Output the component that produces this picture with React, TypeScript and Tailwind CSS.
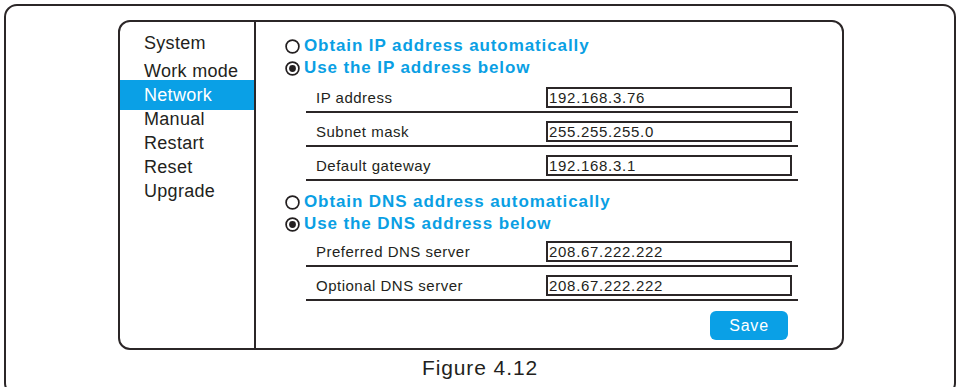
import React from "react";

function Radio({ checked }: { checked: boolean }) {
  return (
    <svg width="15" height="15" viewBox="0 0 15 15" className="shrink-0">
      <circle cx="7.5" cy="7.5" r="6.4" fill="none" stroke="#231f20" strokeWidth="1.7" />
      {checked && <circle cx="7.5" cy="7.5" r="3.4" fill="#231f20" />}
    </svg>
  );
}

function RadioLine({ checked, text }: { checked: boolean; text: string }) {
  return (
    <div className="flex h-[22px] items-center gap-[4px] pl-[29px]">
      <Radio checked={checked} />
      <span className="text-[17px] font-bold leading-[22px] tracking-[0.9px] text-[#0a9fe4]">{text}</span>
    </div>
  );
}

function Row({ label, value, tall }: { label: string; value: string; tall: boolean }) {
  return (
    <div
      className={
        "ml-[50px] mr-[44px] flex items-end justify-between border-b-2 border-[#2b2627] pb-[3px] pl-[10px] pr-[6px] " +
        (tall ? "h-[34px]" : "h-[32px]")
      }
    >
      <span className="text-[15px] leading-[21px] tracking-[0.5px] text-[#231f20]">{label}</span>
      <div className="h-[21px] w-[246px] border-2 border-[#2b2627] pl-[1px] text-[15px] leading-[17px] tracking-[0.7px] text-[#231f20]">
        {value}
      </div>
    </div>
  );
}

export default function App() {
  const menu = "text-[18px] tracking-[0.3px] text-[#231f20] pl-[24px]";
  return (
    <div className="h-[387px] w-[957px] overflow-hidden bg-white font-['Liberation_Sans',Arial,sans-serif]">
      <div className="ml-[4px] mt-[4px] h-[392px] w-[952px] rounded-[13px] border-2 border-[#2b2627]">
        <div className="ml-[112px] mt-[14px] flex h-[330px] w-[726px] rounded-[12px] border-2 border-[#2b2627]">
          {/* Sidebar */}
          <div className="flex w-[136px] flex-col border-r-2 border-[#2b2627]">
            <div className={menu + " mt-[11px] leading-[20px]"}>System</div>
            <div className={menu + " mt-[8px] leading-[20px]"}>Work mode</div>
            <div className={"-mt-[1px] h-[30px] bg-[#0aa0e6] pl-[24px] text-[18px] leading-[30px] tracking-[0.3px] text-white"}>Network</div>
            <div className={menu + " h-[18px] leading-[18px]"}>Manual</div>
            <div className={menu + " mt-[3px] h-[24px] leading-[24px]"}>Restart</div>
            <div className={menu + " h-[24px] leading-[24px]"}>Reset</div>
            <div className={menu + " h-[24px] leading-[24px]"}>Upgrade</div>
          </div>
          {/* Content */}
          <div className="flex flex-1 flex-col pt-[13px]">
            <RadioLine checked={false} text="Obtain IP address automatically" />
            <RadioLine checked={true} text="Use the IP address below" />
            <Row label="IP address" value="192.168.3.76" tall={true} />
            <Row label="Subnet mask" value="255.255.255.0" tall={true} />
            <Row label="Default gateway" value="192.168.3.1" tall={true} />
            <div className="mt-[10px]">
              <RadioLine checked={false} text="Obtain DNS address automatically" />
              <RadioLine checked={true} text="Use the DNS address below" />
            </div>
            <Row label="Preferred DNS server" value="208.67.222.222" tall={false} />
            <Row label="Optional DNS server" value="208.67.222.222" tall={true} />
            <div className="mt-[10px] flex justify-end pr-[54px]">
              <button className="h-[29px] w-[78px] rounded-[6px] bg-[#0aa0e6] text-[16px] tracking-[0.8px] text-white">
                Save
              </button>
            </div>
          </div>
        </div>
        <div className="mt-[6px] text-center text-[21px] leading-[24px] tracking-[0.9px] text-[#231f20]">Figure 4.12</div>
      </div>
    </div>
  );
}
